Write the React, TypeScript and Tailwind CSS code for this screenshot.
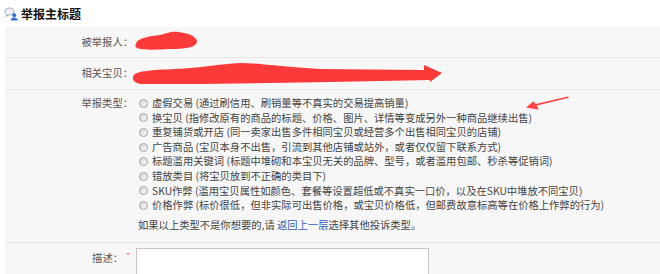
import React from "react";

const TYPES: { name: string; desc: string }[] = [
  { name: "虚假交易", desc: "通过刷信用、刷销量等不真实的交易提高销量" },
  { name: "换宝贝", desc: "指修改原有的商品的标题、价格、图片、详情等变成另外一种商品继续出售" },
  { name: "重复铺货或开店", desc: "同一卖家出售多件相同宝贝或经营多个出售相同宝贝的店铺" },
  { name: "广告商品", desc: "宝贝本身不出售，引流到其他店铺或站外，或者仅仅留下联系方式" },
  { name: "标题滥用关键词", desc: "标题中堆砌和本宝贝无关的品牌、型号，或者滥用包邮、秒杀等促销词" },
  { name: "错放类目", desc: "将宝贝放到不正确的类目下" },
  { name: "SKU作弊", desc: "滥用宝贝属性如颜色、套餐等设置超低或不真实一口价，以及在SKU中堆放不同宝贝" },
  { name: "价格作弊", desc: "标价很低，但非实际可出售价格，或宝贝价格低，但邮费故意标高等在价格上作弊的行为" },
];

export default function App() {
  return (
    <div className="relative h-[274px] w-[660px] overflow-hidden bg-white font-['Noto_Sans_CJK_SC','Noto_Sans',sans-serif] text-[10.3px] leading-[14.6px] text-[#444]">
      {/* Header */}
      <div className="flex h-[27px] items-center gap-[3px] pl-[4px]">
        <ReportIcon />
        <h1 className="text-[12px] font-bold leading-none text-[#111]">举报主标题</h1>
      </div>

      {/* Form panel */}
      <div className="ml-[5px] bg-[#f7f7f7]">
        <div className="flex h-[31px] items-center border-b border-[#e8e8e8]">
          <Label>被举报人：</Label>
          <div className="pl-[4px]" />
        </div>

        <div className="flex h-[32px] items-center border-b border-[#e8e8e8]">
          <Label>相关宝贝：</Label>
          <div className="pl-[4px]" />
        </div>

        <div className="flex border-b border-[#e8e8e8] pb-[10px] pt-[6px]">
          <Label>举报类型：</Label>
          <div className="pl-[5px]">
            <ul className="flex flex-col">
              {TYPES.map((t) => (
                <li key={t.name} className="flex h-[14.6px] items-center gap-[4px] pl-[1px]">
                  <span className="h-[9px] w-[9px] shrink-0 rounded-full border border-[#a3a3a3] bg-gradient-to-br from-[#d4d4d4] to-[#fafafa]" />
                  <span className="whitespace-nowrap">
                    {t.name} ({t.desc})
                  </span>
                </li>
              ))}
            </ul>
            <p className="mt-[5px] whitespace-nowrap">
              如果以上类型不是你想要的,请{" "}
              <a className="text-[#2f5fb8]">返回上一层</a>选择其他投诉类型。
            </p>
          </div>
        </div>

        <div className="flex pt-[5px]">
          <div className="w-[128px] shrink-0 pt-[3px] text-right text-[#555]">
            描述：<span className="inline-block w-[10px] text-center align-top text-[8px] leading-[10px] text-[#ff5a5a]">*</span>
          </div>
          <div className="pl-[3px]">
            <div className="h-[40px] w-[293px] border border-[#c4c4c4] bg-white" />
          </div>
        </div>
      </div>

      {/* Red annotation marks drawn over the screenshot */}
      <svg className="pointer-events-none absolute inset-0" width="660" height="274" viewBox="0 0 660 274">
        <path
          d="M136 44 C137 38 150 36 160 35 C168 33 172 31 178 32 C188 33 196 36 197 41 C197 47 188 49 170 49 C155 50 142 50 137 48 C135 47 135 45 136 44 Z"
          fill="#fd3a3a"
        />
        <path
          d="M133 77 C134 71 150 70 175 69 C200 68 220 64 240 63 C260 63 280 67 320 69 L424 70 L424 65 L442 73 L430 82 L430 80 L330 82 L200 84 L145 84 C136 84 132 81 133 77 Z"
          fill="#fd3a3a"
        />
        <path
          d="M568 96.4 L569 97.8 L537 105.6 L538.5 109.8 L526 107.6 L533.5 101.2 L535.5 104 Z"
          fill="#f44"
        />
      </svg>
    </div>
  );
}

function Label({ children }: { children: React.ReactNode }) {
  return <div className="w-[128px] shrink-0 text-right text-[#555]">{children}</div>;
}

function ReportIcon() {
  return (
    <svg width="14" height="14" viewBox="0 0 14 14">
      <path
        d="M1 4.5 C1 2.3 3 1 5.5 1 C8 1 10 2.3 10 4.5 C10 6.6 8 8 5.5 8 L4 8 L2.3 9.6 L2.8 7.4 C1.6 6.8 1 5.7 1 4.5 Z"
        fill="#eef0f3"
        stroke="#9aa0a8"
        strokeWidth="0.9"
      />
      <circle cx="10.2" cy="8.3" r="2" fill="#2f6fd0" />
      <path d="M6.6 13.6 C6.8 11.3 8.3 10.5 10.2 10.5 C12.1 10.5 13.6 11.3 13.8 13.6 Z" fill="#2f6fd0" />
    </svg>
  );
}
